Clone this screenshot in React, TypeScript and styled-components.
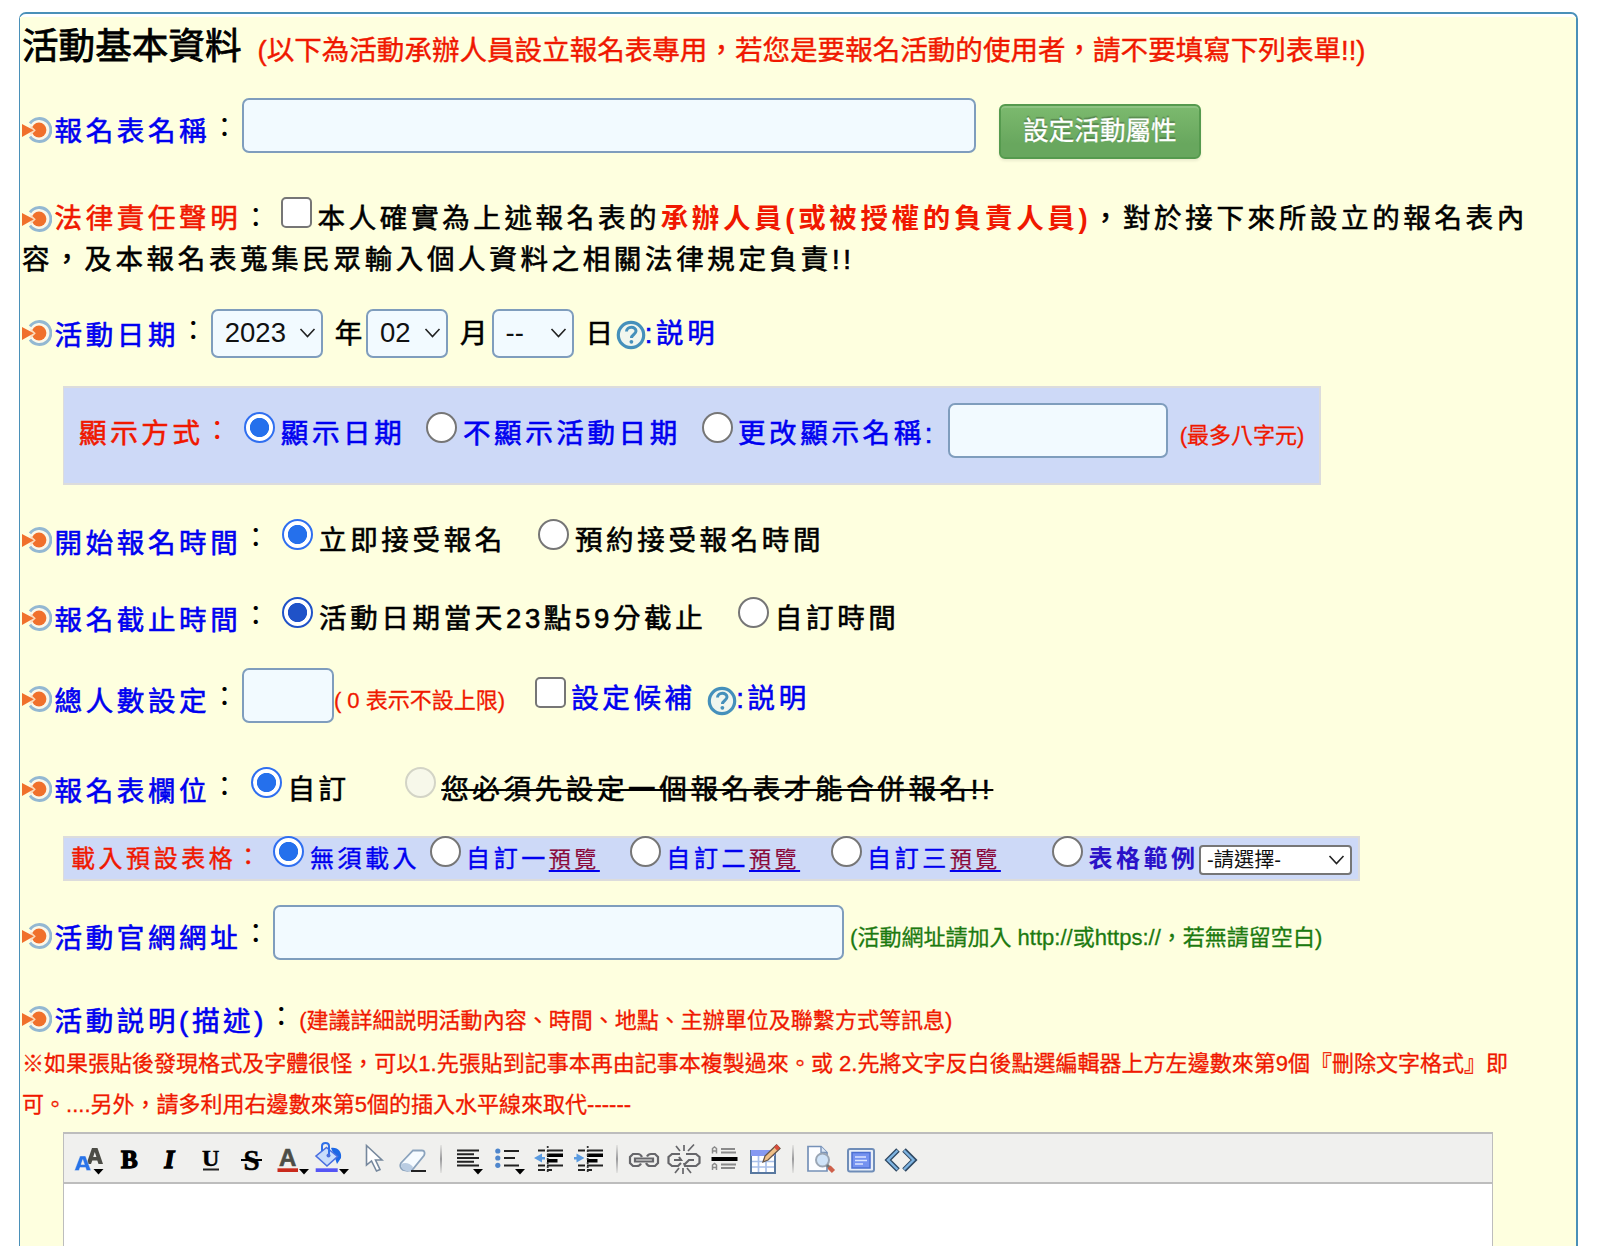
import React from 'react';
import styled, { createGlobalStyle, css } from 'styled-components';

const BLUE = '#0000f0';
const RED = '#f01800';

const GlobalStyle = createGlobalStyle`
  * { box-sizing: border-box; }
  html, body { margin: 0; padding: 0; background: #fff; }
  body { font-family: "Liberation Sans", "Noto Sans CJK TC", sans-serif; overflow: hidden; }
`;

type Place = { $l?: number; $dy?: number };

const place = css<Place>`
  flex: none;
  margin: ${p => p.$dy ?? 0}px 0 ${p => -(p.$dy ?? 0)}px ${p => p.$l ?? 0}px;
`;

const Page = styled.div`
  width: 1600px;
  height: 1246px;
  padding: 12px 0 0 19px;
  overflow: hidden;
  background: #fff;
`;

const Panel = styled.main`
  width: 1559px;
  height: 1260px;
  padding-top: 3px;
  border: 2px solid #4a90b8;
  border-left-width: 1px;
  border-radius: 7px 7px 0 0;
  background: #fff;
`;

const PanelBody = styled.div`
  display: flex;
  flex-direction: column;
  height: 1250px;
  background: #feffdf;
`;

const Row = styled.div<{ $h: number; $mt?: number }>`
  flex: none;
  display: flex;
  align-items: center;
  height: ${p => p.$h}px;
  margin-top: ${p => p.$mt ?? 0}px;
  padding-left: 2px;
  white-space: nowrap;
`;

const Text = styled.span<Place & { $c?: string; $bold?: boolean; $strike?: boolean }>`
  ${place}
  padding-top: 1px;
  font-size: 27.5px;
  line-height: 40px;
  letter-spacing: 3.65px;
  color: ${p => p.$c ?? '#000'};
  font-weight: ${p => (p.$bold ? 700 : 400)};
  -webkit-text-stroke: ${p => (p.$bold ? 0 : 0.6)}px currentColor;
  text-decoration: ${p => (p.$strike ? 'line-through' : 'none')};
`;

const Colon = styled(Text)`
  -webkit-text-stroke: 0;
`;

const SmallText = styled(Text)`
  font-size: 24px;
  letter-spacing: 3.55px;
  -webkit-text-stroke-width: ${p => (p.$bold ? 0 : 0.4)}px;
`;

const PreviewLink = styled.a`
  color: #8a0a3c;
  font-size: 22px;
  -webkit-text-stroke: 0.2px currentColor;
  text-decoration: underline;
  text-decoration-color: ${BLUE};
  text-underline-offset: 3px;
  text-decoration-thickness: 2px;
`;

const Note = styled.span<Place & { $c?: string }>`
  ${place}
  font-size: 22.03px;
  line-height: 40px;
  color: ${p => p.$c ?? RED};
  -webkit-text-stroke: 0.3px currentColor;
`;

const Title = styled.h1<Place>`
  ${place}
  font-size: 36.6px;
  line-height: 50px;
  font-weight: 400;
  -webkit-text-stroke: 0.8px currentColor;
`;

const TitleNote = styled(Note)`
  font-size: 27.55px;
  -webkit-text-stroke: 0.4px currentColor;
`;

const HelpParagraph = styled.p`
  flex: none;
  margin: 0;
  padding: 1px 0 0 2px;
  height: 82px;
  font-size: 22.03px;
  line-height: 41px;
  color: ${RED};
  white-space: nowrap;
  -webkit-text-stroke: 0.3px currentColor;
`;

const TextField = styled.input<Place & { $w: number }>`
  ${place}
  width: ${p => p.$w}px;
  height: 55px;
  border: 2px solid #7f9dbd;
  border-radius: 7px;
  background: #f2faff;
  outline: none;
`;

const GreenButton = styled.button<Place>`
  ${place}
  width: 202px;
  height: 55px;
  padding: 0 0 2px;
  border: 2px solid #559a4e;
  border-radius: 6px;
  background: linear-gradient(#7cba6e, #68a75e 75%);
  box-shadow: inset 0 2px 0 rgba(255, 255, 255, 0.15), 0 2px 3px rgba(0, 0, 0, 0.08);
  color: #fff;
  font: 400 25.6px/44px "Liberation Sans", "Noto Sans CJK TC", sans-serif;
  text-shadow: 0 -2px 1px rgba(0, 0, 0, 0.25);
  -webkit-text-stroke: 0.3px currentColor;
`;

const Choice = styled.input<Place & { $dot?: string }>`
  ${place}
  appearance: none;
  width: 31px;
  height: 31px;
  border: 2px solid #767676;
  border-radius: ${p => (p.type === 'radio' ? '50%' : '5px')};
  background: #fff;
  &[type='radio']:checked {
    border-color: ${p => p.$dot ?? '#2f6ff0'};
    background: radial-gradient(circle, ${p => p.$dot ?? '#2570ec'} 9.2px, #fff 10px);
  }
  &:disabled {
    border-color: #d3d4c6;
    background: #f7f8ea;
  }
`;

const SelectBox = styled.div<Place & { $w: number; $plain?: boolean }>`
  ${place}
  display: flex;
  align-items: center;
  justify-content: space-between;
  width: ${p => p.$w}px;
  height: ${p => (p.$plain ? 30 : 49)}px;
  padding: ${p => (p.$plain ? '0 5px 0 6px' : '0 5px 0 12px')};
  border: 2px solid ${p => (p.$plain ? '#767676' : '#7f9dbd')};
  border-radius: ${p => (p.$plain ? 4 : 7)}px;
  background: ${p => (p.$plain ? '#fff' : '#f2faff')};
  font-size: ${p => (p.$plain ? 20.2 : 27.5)}px;
  line-height: 28px;
  color: #111;
`;

const IndentBox = styled.div<{ $w: number; $h: number; $mt?: number }>`
  flex: none;
  display: flex;
  align-items: center;
  width: ${p => p.$w}px;
  height: ${p => p.$h}px;
  margin: ${p => p.$mt ?? 0}px 0 0 43px;
  border: 2px solid #dcdcdc;
  border-left-width: 1px;
  background: #cdd9f7;
  white-space: nowrap;
`;

const IconSlot = styled.span<Place>`
  ${place}
  display: inline-flex;
`;

const Editor = styled.section`
  flex: none;
  width: 1430px;
  height: 160px;
  margin: 8px 0 0 43px;
  border: 2px solid #bdbdbd;
  border-left-width: 1px;
  border-right-width: 1px;
  background: #fff;
`;

const Toolbar = styled.div`
  display: flex;
  align-items: center;
  height: 50px;
  padding: 1px 0 0 5px;
  border-bottom: 2px solid #bdbdbd;
  background: #f0f0ee;
`;

const Tool = styled.span`
  flex: none;
  display: flex;
  width: 40.5px;
  height: 40px;
`;

const Divider = styled.i`
  flex: none;
  width: 2px;
  height: 28px;
  margin: 0 6px;
  background: linear-gradient(#e4e4e2, #9a9a9c 50%, #e4e4e2);
`;

const Bullet = () => (
  <IconSlot>
    <svg width="30" height="30" viewBox="0 0 30 30">
      <circle cx="17.500" cy="15" r="11.500" fill="#fbf8ea" />
      <path d="M8 8.300A11.500 11.500 0 1 1 8 21.700" fill="none" stroke="#93b8d2" strokeWidth="2.900" />
      <circle cx="17" cy="15" r="7.400" fill="#f0702c" />
      <path d="M8.500 10.500L13.800 15.300 8.500 20.500Z" fill="#fbdcbd" />
      <path d="M0 9L11.800 15.300 0 22Z" fill="#f0702c" />
    </svg>
  </IconSlot>
);

const Help = (p: Place) => (
  <IconSlot {...p}>
    <svg width="30" height="30" viewBox="0 0 30 30">
      <circle cx="15" cy="15" r="12.700" fill="#f1f6ee" stroke="#4590bb" strokeWidth="3.200" />
      <path d="M10.500 11.500c0-5.500 9.500-5.500 9.500-.5 0 3.500-4.500 3.500-4.500 7" fill="none" stroke="#4590bb" strokeWidth="3" />
      <circle cx="15.400" cy="21.800" r="1.900" fill="#4590bb" />
    </svg>
  </IconSlot>
);

const Chevron = () => (
  <svg width="17" height="12" viewBox="0 0 17 12">
    <path d="M1.500 2 L8.500 9.500 L15.500 2" fill="none" stroke="#222" strokeWidth="1.600" />
  </svg>
);

const Label = ({ children, c = BLUE, dy = 2 }: { children: string; c?: string; dy?: number }) => (
  <>
    <Bullet />
    <Text $l={2.500} $dy={dy} $c={c}>{children}</Text>
    <Colon $l={0.500} $dy={dy === 0 ? -1 : -2.500}>：</Colon>
  </>
);

const Drop = ({ x }: { x: number }) => <path d={`M${x} 30h10l-5 5.500z`} fill="#000" />;
const serif = { fontFamily: 'Liberation Serif, serif', fontWeight: 700 };
const sans = { fontFamily: 'Liberation Sans, sans-serif', fontWeight: 700 };

const Bars = ({ d, w = 2, c = '#222' }: { d: string; w?: number; c?: string }) => (
  <path d={d} stroke={c} strokeWidth={w} fill="none" />
);

const Indentation = ({ out }: { out?: boolean }) => (
  <>
    <Bars d="M9 11.500h7M18 11.500h16M9 26.500h7M18 26.500h16M9 31h7M18 31h5" />
    <Bars d="M18 16.200h16M18 21.800h10.500" w={3.6} c="#000" />
    <path d="M18.700 7v28" stroke="#333" strokeWidth="1.800" strokeDasharray="2 2" />
    <path d={out ? 'M5 19l8-4.500v3.500h3v2.500h-3v3z' : 'M15.500 19l-8-4.500v3.500h-2.500v2.500h2.500v3z'} fill="#5b9be0" />
  </>
);

const tools: (React.ReactNode | null)[] = [
  <>
    <path fillRule="evenodd" d="M17.500 25L23 9h5.500L34 25h-4.500l-1.200-3.500h-5L22 25zM24.200 18h3.200l-1.600-5z" fill="#4d4d46" />
    <path fillRule="evenodd" d="M5.500 31.500L11 17h5.500L22 31.500h-4.500l-1-3h-5.500l-1 3zM12 25.500h3.500l-1.700-5z" fill="#2873e8" stroke="#f0f0ee" strokeWidth="0.400" />
    <Drop x={24.500} />
  </>,
  <text x="11" y="29" {...serif} fontSize="25" stroke="#000" strokeWidth="1.300">B</text>,
  <text x="14.500" y="29" {...serif} fontStyle="italic" fontSize="25" stroke="#000" strokeWidth="1.500">I</text>,
  <>
    <text x="11" y="27" {...serif} fontSize="24" stroke="#000" strokeWidth="0.500">U</text>
    <Bars d="M12 30.500h16" />
  </>,
  <>
    <text x="12.500" y="30.500" {...serif} fontSize="29" stroke="#000" strokeWidth="0.5">S</text>
    <Bars d="M10 21h21" c="#000" />
  </>,
  <>
    <text x="7" y="27" {...sans} fontSize="24" fill="#4d4d46" stroke="#4d4d46" strokeWidth="0.600">A</text>
    <path d="M5.500 29.300h20.500v3.700h-20.500z" fill="#c92a1c" />
    <Drop x={27} />
  </>,
  <>
    <path d="M19 9c7-1 11 4 10 10l-4 6-3-9z" fill="#1b67e6" />
    <path d="M14.500 8.500L25.500 17.500 15 27 4 17z" fill="#c8dcfb" stroke="#4a6ee0" strokeWidth="1.600" />
    <path d="M10 12V7c0-4 7-4 7 0v9" fill="none" stroke="#2f6fe8" strokeWidth="2" />
    <circle cx="16.500" cy="16.500" r="2" fill="#4a6ee0" />
    <path d="M3.700 29.300h22v3.700h-22z" fill="#5555f5" />
    <Drop x={27} />
  </>,
  <path d="M13.500 6.500V26l5-4 5 10 3.500-1.500-4.500-9.500h6.500z" fill="#fff" stroke="#76889d" strokeWidth="1.600" />,
  <>
    <path d="M8 24L20 11.500h9c3 0 3 3 2 5L20 30c-3 2-7 2-10 1-3-2-3-5-2-7z" fill="#f6fbff" stroke="#8ba3bd" strokeWidth="1.800" />
    <path d="M8 25c4-2 9-1 12 3l-2 4c-5 1-10-1-10-7z" fill="#b9cce2" />
    <Bars d="M18 32h15" />
  </>,
  null,
  <>
    <Bars d="M9 11.500h22M9 15.200h17M9 19h22M9 22.700h17M9 26.500h22" />
    <Drop x={25} />
  </>,
  <>
    <Bars d="M16 12h15M16 19h11M16 26.500h15" />
    <g fill="#4f86cc"><circle cx="9.800" cy="12" r="2.600" /><circle cx="9.800" cy="19" r="2.600" /><circle cx="9.800" cy="26.300" r="2.600" /></g>
    <Drop x={27} />
  </>,
  <Indentation out />,
  <Indentation />,
  null,
  <g fill="none" stroke="#66666a" strokeWidth="2.200">
    <path d="M17 24.500c-1 2-3 2.500-4 2.500H9l-3-3v-6l3-3h5c2 0 3 1 4 3" />
    <path d="M23 17.500c1-2 3-2.500 4-2.500h4l3 3v6l-3 3h-5c-2 0-3-1-4-3" />
    <path d="M11 19.500h18v3H11z" />
  </g>,
  <g fill="none" stroke="#66666a" strokeWidth="2.200">
    <path d="M16 15H8l-3.500 3v6L8 27h6l3-3M10 21h7l-2-3" />
    <path d="M22 15h10l3.500 3v6L32 27H21l-1-3M30 21h-5l-4 4" />
    <path d="M12 7l4 5M20 6v6M30 5.500l-6 6.500M11 34l4-5M19 35v-6M27 34l-4-5" strokeWidth="1.700" />
  </g>,
  <>
    <Bars d="M16 10h14M16 13.500h15M16 25.500h15M16 29h14" w={1.8} c="#8a8a8a" />
    <path d="M7.500 14.500V9.500l2-1.500 2 1.500v5M7.500 12h4M7.500 31v-5l2-1.500 2 1.500v5M7.500 28.500h4" fill="none" stroke="#8a8a8a" strokeWidth="1.500" />
    <Bars d="M6.500 20h26" w={4} c="#000" />
  </>,
  <>
    <path d="M6 12h24v22H6z" fill="#fff" stroke="#58789f" strokeWidth="2" />
    <path d="M6 11h24v6H6z" fill="#8599f2" />
    <path d="M7 22.500h22M7 28h22M13.500 17v16M21 17v16" stroke="#a9c0ea" strokeWidth="1.700" />
    <path d="M18 23l2-6L31.500 6l3.500 3.500L23 21z" fill="#f0bf87" stroke="#655447" strokeWidth="1.300" />
    <path d="M29 8l3-2.500L35 9l-3 2.500z" fill="#d84c3c" />
  </>,
  null,
  <>
    <path d="M8 7.500h13l6 6V32H8z" fill="#fcfdff" stroke="#7691b8" strokeWidth="1.700" />
    <path d="M21 7.500v6h6" fill="#dce7f5" stroke="#7691b8" strokeWidth="1.400" />
    <circle cx="22.500" cy="21" r="6.500" fill="#cfe3f8" stroke="#9aa6b5" strokeWidth="2" />
    <path d="M27 26l3 3" stroke="#777" strokeWidth="3" />
    <path d="M29 28l4.500 4.500" stroke="#cf604a" strokeWidth="4.500" />
  </>,
  <>
    <rect x="8" y="10" width="26" height="22.500" rx="2" fill="#e8eef8" stroke="#6f8db8" strokeWidth="2" />
    <rect x="12" y="13.500" width="18" height="15.500" fill="#7592f0" stroke="#4c6fd0" strokeWidth="1.500" />
    <Bars d="M15 18h11M15 21.500h12M15 25h8" w={1.4} c="#dbe5ff" />
  </>,
  <>
    <path d="M17 11L7 21l10 10M23 11l10 10-10 10" fill="none" stroke="#304a64" strokeWidth="5" />
    <path d="M16.500 11.500L7 21l9.500 9.500M23 11.500l9.500 9.500-9.500 9.500" fill="none" stroke="#7eb4e2" strokeWidth="2.400" />
  </>,
];

export default function App() {
  return (
    <>
      <GlobalStyle />
      <Page>
        <Panel>
          <PanelBody>
            <Row $h={59}>
              <Title $dy={0.500}>活動基本資料</Title>
              <TitleNote $l={16} $dy={4}>(以下為活動承辦人員設立報名表專用，若您是要報名活動的使用者，請不要填寫下列表單!!)</TitleNote>
            </Row>

            <Row $h={107}>
              <Label>報名表名稱</Label>
              <TextField $dy={-4} $w={734} />
              <GreenButton $l={23} $dy={2}>設定活動屬性</GreenButton>
            </Row>

            <Row $h={41} $mt={15}>
              <Label c={RED} dy={0}>法律責任聲明</Label>
              <Choice type="checkbox" $l={7.500} $dy={-6} />
              <Text $l={6}>本人確實為上述報名表的</Text>
              <Text $l={0.500} $c={RED} $bold>承辦人員(或被授權的負責人員)</Text>
              <Text $l={0.500}>，對於接下來所設立的報名表內</Text>
            </Row>
            <Row $h={41}>
              <Text>容，及本報名表蒐集民眾輸入個人資料之相關法律規定負責!!</Text>
            </Row>

            <Row $h={106}>
              <Label>活動日期</Label>
              <SelectBox $w={112}>2023<Chevron /></SelectBox>
              <Text $l={12}>年</Text>
              <SelectBox $w={82}>02<Chevron /></SelectBox>
              <Text $l={12}>月</Text>
              <SelectBox $l={0.500} $w={82}>--<Chevron /></SelectBox>
              <Text $l={12}>日</Text>
              <Help $l={-1} $dy={2} />
              <Text $l={-1} $c={BLUE}>:説明</Text>
            </Row>

            <IndentBox $w={1258} $h={99}>
              <Text $l={15} $dy={-2} $c={RED}>顯示方式</Text>
              <Colon $dy={-5} $c={RED}>：</Colon>
              <Choice type="radio" name="show" defaultChecked $l={9.500} $dy={-8} />
              <Text $l={5.500} $dy={-2} $c={BLUE}>顯示日期</Text>
              <Choice type="radio" name="show" $l={21} $dy={-8} />
              <Text $l={5.500} $dy={-2} $c={BLUE}>不顯示活動日期</Text>
              <Choice type="radio" name="show" $l={21} $dy={-8} />
              <Text $l={5} $dy={-2} $c={BLUE}>更改顯示名稱:</Text>
              <TextField $l={11.500} $dy={-5} $w={220} />
              <Note $l={12}>(最多八字元)</Note>
            </IndentBox>

            <Row $h={110}>
              <Label dy={3}>開始報名時間</Label>
              <Choice type="radio" name="start" defaultChecked $l={9} $dy={-6} />
              <Text $l={6}>立即接受報名</Text>
              <Choice type="radio" name="start" $l={32.500} $dy={-6} />
              <Text $l={5.500}>預約接受報名時間</Text>
            </Row>

            <Row $h={46}>
              <Label>報名截止時間</Label>
              <Choice type="radio" name="end" defaultChecked $dot="#1f52c8" $l={9} $dy={-6} />
              <Text $l={6}>活動日期當天23點59分截止</Text>
              <Choice type="radio" name="end" $l={32} $dy={-6} />
              <Text $l={5.500}>自訂時間</Text>
            </Row>

            <Row $h={116}>
              <Label>總人數設定</Label>
              <TextField $dy={-4} $w={92} />
              <Note $dy={2}>( 0 表示不設上限)</Note>
              <Choice type="checkbox" $l={29.500} $dy={-6.500} />
              <Text $l={5.500} $dy={-0.500} $c={BLUE}>設定候補</Text>
              <Help $l={11} $dy={1.500} />
              <Text $l={-0.500} $dy={-0.500} $c={BLUE}>:説明</Text>
            </Row>

            <Row $h={64}>
              <Label>報名表欄位</Label>
              <Choice type="radio" name="fields" defaultChecked $l={9} $dy={-6.500} />
              <Text $l={5.500}>自訂</Text>
              <Choice type="radio" name="fields" disabled $l={55} $dy={-6.500} />
              <Text $l={5.500} $strike>您必須先設定一個報名表才能合併報名!!</Text>
            </Row>

            <IndentBox $w={1297} $h={45} $mt={15}>
              <SmallText $l={7} $c={RED}>載入預設表格</SmallText>
              <SmallText $dy={-2} $c={RED}>：</SmallText>
              <Choice type="radio" name="preset" defaultChecked $l={9.500} $dy={-7} />
              <SmallText $l={5.500} $c={BLUE}>無須載入</SmallText>
              <Choice type="radio" name="preset" $l={9.500} $dy={-7} />
              <SmallText $l={5.500} $c={BLUE}>自訂一<PreviewLink>預覽</PreviewLink></SmallText>
              <Choice type="radio" name="preset" $l={30} $dy={-7} />
              <SmallText $l={5.500} $c={BLUE}>自訂二<PreviewLink>預覽</PreviewLink></SmallText>
              <Choice type="radio" name="preset" $l={30.500} $dy={-7} />
              <SmallText $l={5.500} $c={BLUE}>自訂三<PreviewLink>預覽</PreviewLink></SmallText>
              <Choice type="radio" name="preset" $l={51} $dy={-7} />
              <SmallText $l={5.500} $c="#2a12c8" $bold>表格範例</SmallText>
              <SelectBox $l={0.500} $dy={1.500} $w={153} $plain>-請選擇-<Chevron /></SelectBox>
            </IndentBox>

            <Row $h={110}>
              <Label>活動官網網址</Label>
              <TextField $dy={-4} $w={570.500} />
              <Note $l={6.500} $dy={2} $c="#1c7a10">(活動網址請加入 http://或https://，若無請留空白)</Note>
            </Row>

            <Row $h={46} $mt={5}>
              <Label dy={2.500}>活動説明(描述)</Label>
              <Note $l={0.500} $dy={2}>(建議詳細説明活動內容、時間、地點、主辦單位及聯繫方式等訊息)</Note>
            </Row>
            <HelpParagraph>
              ※如果張貼後發現格式及字體很怪，可以1.先張貼到記事本再由記事本複製過來。或 2.先將文字反白後點選編輯器上方左邊數來第9個『刪除文字格式』即<br />
              可。....另外，請多利用右邊數來第5個的插入水平線來取代------
            </HelpParagraph>

            <Editor>
              <Toolbar>
                {tools.map((t, i) =>
                  t === null ? (
                    <Divider key={i} />
                  ) : (
                    <Tool key={i}>
                      <svg width="40" height="40" viewBox="0 0 40 40">{t}</svg>
                    </Tool>
                  ),
                )}
              </Toolbar>
            </Editor>
          </PanelBody>
        </Panel>
      </Page>
    </>
  );
}
